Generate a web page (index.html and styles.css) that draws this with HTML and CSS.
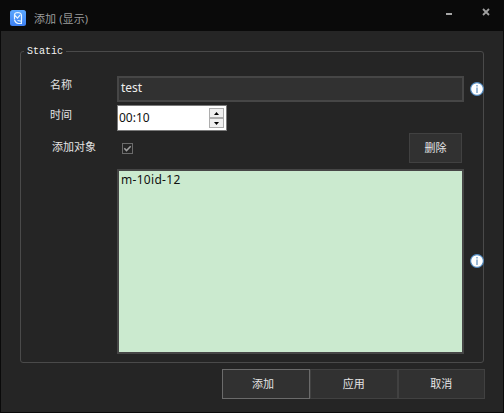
FILE: index.html
```html
<!DOCTYPE html>
<html lang="zh-CN">
<head>
<meta charset="utf-8">
<title>添加 (显示)</title>
<link rel="stylesheet" href="styles.css">
</head>
<body>
<div class="window">
  <header class="titlebar">
    <svg class="logo" viewBox="0 0 16 16"><defs><linearGradient id="g" x2="0" y2="1"><stop stop-color="#5ba8ff"/><stop offset="1" stop-color="#3d80f2"/></linearGradient></defs><rect width="16" height="16" rx="2.5" fill="url(#g)"/><path d="M4.5 9.5V4.8Q4.8 2.5 7.5 2.5Q11.5 2.6 11.5 6V11.5M4.5 5L7.5 8.2L10 5.2M4.5 10Q5.5 13 8.5 13.5H11.4V11.2L7.5 10.5" fill="none" stroke="#e8f5ff" stroke-width="1.2"/></svg>
    <h1 class="title">添加 (显示)</h1>
    <svg class="minimize" viewBox="0 0 6 2"><path d="M0 1H6" stroke="#a6a6a6" stroke-width="2"/></svg>
    <svg class="close" viewBox="0 0 8 8"><path d="M1 1L7 7M7 1L1 7" stroke="#a0a0a0" stroke-width="1.8"/></svg>
  </header>
  <main class="body">
    <fieldset class="group">
      <legend>Static</legend>
      <div class="form">
        <label class="label name-label">名称</label>
        <div class="field name">test</div>
        <svg class="info" viewBox="0 0 14 14"><circle cx="7" cy="7" r="6.4" fill="#fff" stroke="#4d86bd" stroke-width="1.1"/><path d="M6 3H8V4.6H6ZM6 5.6H8V11H6Z" fill="#9bb9d6"/></svg>
        <label class="label time-label">时间</label>
        <div class="spinner"><span>00:10</span>
          <div class="steps">
            <i><svg viewBox="0 0 5 3"><path d="M0 3L2.5 0L5 3Z"/></svg></i>
            <i><svg viewBox="0 0 5 3"><path d="M0 0L2.5 3L5 0Z"/></svg></i>
          </div>
        </div>
        <label class="label add-label">添加对象</label>
        <div class="options">
          <svg class="check" viewBox="0 0 11 11"><rect x=".5" y=".5" width="10" height="10" fill="#252525" stroke="#6b6b6b"/><path d="M2.3 5.3L4.5 7.6L8.7 3.2" fill="none" stroke="#a0a0a0" stroke-width="1.5"/></svg>
          <div class="button delete">删除</div>
        </div>
        <div class="field list">m-10id-12</div>
        <svg class="info list-info" viewBox="0 0 14 14"><circle cx="7" cy="7" r="6.4" fill="#fff" stroke="#4d86bd" stroke-width="1.1"/><path d="M6 3H8V4.6H6ZM6 5.6H8V11H6Z" fill="#9bb9d6"/></svg>
      </div>
    </fieldset>
    <footer class="actions">
      <div class="button primary">添加</div>
      <div class="button">应用</div>
      <div class="button">取消</div>
    </footer>
  </main>
</div>
</body>
</html>
```
FILE: styles.css
```css
* { box-sizing: border-box; }
body { margin: 0; background: #0a0a0a; }
svg { display: block; }
.window {
  width: 504px;
  height: 413px;
  display: flex;
  flex-direction: column;
  padding: 0 1px 1px;
  background: #0a0a0a;
  color: #e4e4e4;
  font: 11px/14px "Noto Sans", "Noto Sans CJK SC", sans-serif;
}
.titlebar { height: 31px; display: flex; align-items: flex-start; padding: 10px 13px 0 9px; }
.logo { width: 16px; height: 16px; }
.title {
  margin: 1px auto 0 8px;
  font: 11px/16px "Noto Sans", "Noto Sans CJK SC", sans-serif;
  letter-spacing: 0.1px;
  color: #9c9c9c;
}
.minimize { width: 6px; height: 2px; margin: 3px 30px 0 0; }
.close { width: 8px; height: 8px; margin: -2px 0 0; }
.body { flex: 1; background: #252525; padding: 14px 19px 0 19px; }
.group {
  margin: 0;
  height: 318px;
  padding: 0;
  min-width: 0;
  border: 1px solid #4a4a4a;
  border-radius: 3px;
}
legend {
  margin-left: 3px;
  padding: 0 3px;
  height: 13px;
  font: 10px/14px "Liberation Mono", monospace;
  color: #f4f4f4;
}
.form {
  display: grid;
  grid-template-columns: 96px 347px 20px;
  grid-template-rows: 29px 28px 36px 185px;
  align-items: start;
  padding-top: 18px;
}
.label { padding-left: 29px; white-space: nowrap; }
.name-label { margin-top: 2px; }
.time-label { margin-top: 3px; }
.add-label { margin-top: 7px; padding-left: 31px; }
.field {
  border: 2px solid #464646;
  padding: 1px 2px;
  font: 12px/18px "Noto Sans", sans-serif;
  letter-spacing: 0.3px;
}
.name { height: 26px; background: #313131; color: #eee; letter-spacing: 0; }
.list { grid-column: 2; height: 185px; background: #cbeacf; color: #111; padding-top: 0; }
.info { width: 14px; height: 14px; margin: 6px 0 0 6px; }
.list-info { margin-top: 85px; }
.spinner {
  grid-column: 2 / 4;
  width: 110px;
  height: 26px;
  display: flex;
  justify-content: space-between;
  border: 1px solid #7a7a7a;
  background: #fff;
  color: #111;
  padding: 2px 2px 2px 1px;
  font: 12px/20px "Noto Sans", sans-serif;
}
.steps { width: 15px; display: grid; grid-template-rows: 10px 10px; }
.steps i { display: grid; place-items: center; border: 1px solid #adadad; background: #f0f0f0; }
.steps svg { width: 5px; height: 3px; }
.options { grid-column: 2 / 4; width: 345px; display: flex; justify-content: space-between; align-items: flex-start; }
.check { width: 11px; height: 11px; margin: 10px 0 0 5px; }
.button {
  height: 30px;
  width: 88px;
  display: grid;
  place-items: center;
  border: 1px solid #414141;
  background: #313131;
  padding-bottom: 1px;
}
.delete { width: 53px; }
.actions { display: flex; justify-content: flex-end; margin: 6px -1px 0 0; }
.actions .button:not(.primary) { width: 87.5px; }
.actions .primary { border-color: #6b6b6b; padding-right: 6px; }
```
